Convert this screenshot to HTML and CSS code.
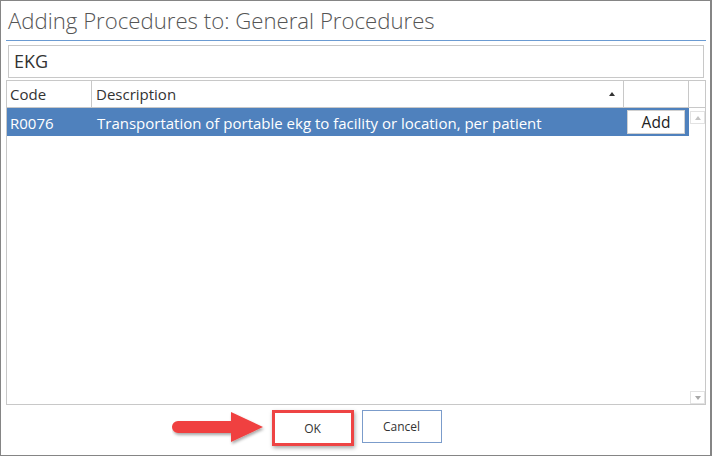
FILE: index.html
```html
<!DOCTYPE html>
<html>
<head>
<meta charset="utf-8">
<link rel="stylesheet" href="styles.css">
</head>
<body>
<div class="window">
  <div class="title">Adding Procedures to: General Procedures</div>
  <div class="search">EKG</div>
  <div class="grid">
    <div class="head">
      <div class="hcell c-code">Code</div>
      <div class="hcell c-desc">Description<span class="sort"></span></div>
      <div class="hcell c-act"></div>
      <div class="hcell c-scroll"></div>
    </div>
    <div class="body">
      <div class="rows">
        <div class="row sel">
          <div class="cell c-code">R0076</div>
          <div class="cell c-desc">Transportation of portable ekg to facility or location, per patient</div>
          <div class="cell c-act"><button class="add">Add</button></div>
        </div>
      </div>
      <div class="vscroll">
        <div class="sbtn"><span class="tri up"></span></div>
        <div class="sbtn"><span class="tri down"></span></div>
      </div>
    </div>
  </div>
  <div class="footer">
    <button class="btn ok">OK</button>
    <button class="btn cancel">Cancel</button>
  </div>
  <svg class="arrow" width="100" height="40" viewBox="0 0 100 40">
    <defs>
      <filter id="sh" x="-20%" y="-30%" width="140%" height="170%">
        <feDropShadow dx="1" dy="2" stdDeviation="1.5" flood-color="#000" flood-opacity="0.35"/>
      </filter>
    </defs>
    <path d="M6 10 H59 V1 L91 16 L59 31 V22 H6 A6 6 0 0 1 6 10 Z" fill="#f0403f" filter="url(#sh)"/>
  </svg>
</div>
</body>
</html>
```
FILE: styles.css
```css
* { box-sizing: border-box; }
html, body { margin: 0; padding: 0; background: #fff; }
body { font-family: "Open Sans", "Noto Sans", sans-serif; color: #333; }

.window {
  position: relative;
  width: 712px;
  height: 456px;
  border: 1px solid #858585;
  border-right-width: 2px;
  padding: 0 4px 0 5px;
  display: flex;
  flex-direction: column;
}

.title {
  height: 40px;
  border-bottom: 1px solid #6b9bd2;
  padding: 6px 0 0 2px;
  font-size: 22.2px;
  font-weight: 300;
  color: #555;
  line-height: 28px;
  white-space: nowrap;
}

.search {
  margin: 4px 2px 0 2px;
  height: 33px;
  border: 1px solid #c8c8c8;
  padding: 0 0 0 5px;
  font-size: 18px;
  line-height: 31px;
  color: #333;
}

.grid {
  margin-top: 2px;
  height: 325px;
  border: 1px solid #c8c8c8;
  display: flex;
  flex-direction: column;
}

.head {
  display: flex;
  height: 27px;
  border-bottom: 1px solid #c8c8c8;
}
.hcell {
  font-size: 15px;
  line-height: 27px;
  padding-left: 3px;
  border-right: 1px solid #c8c8c8;
  color: #333;
  position: relative;
}
.hcell.c-desc { padding-left: 4px; }
.hcell.c-scroll { border-right: none; }
.c-code { width: 85px; }
.c-desc { width: 532px; }
.c-act { width: 65px; }
.c-scroll { width: 16px; }

.sort {
  position: absolute;
  right: 8px;
  top: 11px;
  width: 0; height: 0;
  border-left: 3.5px solid transparent;
  border-right: 3.5px solid transparent;
  border-bottom: 4px solid #333;
}

.body {
  flex: 1;
  display: flex;
}
.rows { width: 682px; }
.row {
  display: flex;
  height: 28px;
}
.row.sel { background: #4f81bd; }
.cell {
  font-size: 15px;
  line-height: 30px;
  padding-left: 3px;
  color: #fff;
  white-space: nowrap;
}
.cell.c-code { width: 85px; }
.cell.c-desc { width: 532px; padding-left: 5px; }
.cell.c-act { width: 65px; padding: 2px 0 0 3px; }
.add {
  display: block;
  width: 58px;
  height: 24px;
  margin: 0;
  padding: 0;
  background: #fff;
  border: 1px solid #d0d0d0;
  font-family: "Open Sans", "Noto Sans", sans-serif;
  font-size: 15.5px;
  line-height: 22px;
  color: #222;
}

.vscroll {
  width: 16px;
  display: flex;
  flex-direction: column;
  justify-content: space-between;
  padding: 3px 0 0 0;
  margin-left: 1px;
}
.sbtn {
  width: 15px;
  height: 13px;
  border: 1px solid #e2e2e2;
  display: flex;
  align-items: center;
  justify-content: center;
}
.tri { width: 0; height: 0; border-left: 3.5px solid transparent; border-right: 3.5px solid transparent; }
.tri.up { border-bottom: 4px solid #c4c4c4; }
.tri.down { border-top: 4px solid #a8a8a8; }

.footer {
  flex: 1;
  display: flex;
  justify-content: center;
  align-items: flex-start;
  gap: 8px;
  padding-top: 5px;
  padding-left: 1px;
}
.btn {
  font-family: "Open Sans", "Noto Sans", sans-serif;
  font-size: 12px;
  color: #333;
  background: #fff;
  margin: 0;
  padding: 0;
}
.ok {
  width: 82px;
  height: 36px;
  border: 3px solid #ee4444;
  box-shadow: 1px 2px 4px rgba(0,0,0,0.35);
}
.cancel {
  width: 80px;
  height: 33px;
  border: 1px solid #7b9ccb;
}

.arrow {
  position: absolute;
  left: 171px;
  top: 410px;
}
```
